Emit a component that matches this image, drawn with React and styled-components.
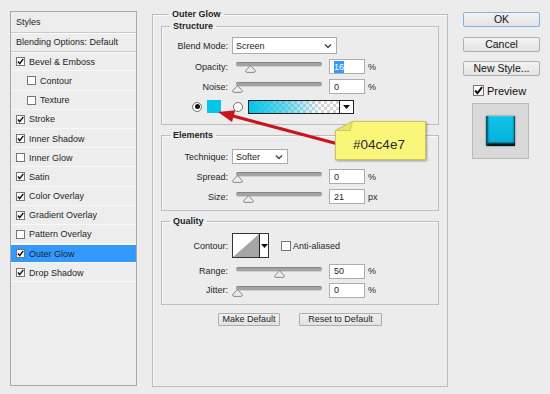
import React from 'react';
import styled, { createGlobalStyle } from 'styled-components';

const Global = createGlobalStyle`
  html, body { margin: 0; padding: 0; background: #ececec; }
  body { font-family: "Liberation Sans", Arial, sans-serif; font-size: 9px; color: #222; }
  #root { width: 550px; height: 394px; overflow: hidden; }
`;

const Dialog = styled.div`
  position: relative;
  width: 550px;
  height: 394px;
  box-sizing: border-box;
  display: flex;
  align-items: flex-start;
  padding: 9px 0 0 10px;
  background: #ececec;
`;

/* ---------- left styles list ---------- */
const StylesPanel = styled.div`
  margin-top: 2px;
  width: 127px;
  height: 375px;
  box-sizing: border-box;
  border: 1px solid #a9a9a9;
  background: #ededed;
  display: flex;
  flex-direction: column;
`;

const PanelHeader = styled.div`
  height: ${p => p.$h}px;
  flex: none;
  box-sizing: border-box;
  display: flex;
  align-items: center;
  padding-left: 5px;
  border-bottom: 1px solid #c9c9c9;
  box-shadow: 0 1px 0 #fbfbfb;
  color: #1e1e1e;
`;

const ListRow = styled.div`
  height: 19.2px;
  flex: none;
  box-sizing: border-box;
  display: flex;
  align-items: center;
  gap: 4px;
  padding-left: ${p => (p.$nested ? 16 : 5)}px;
  border-top: 1px solid ${p => (p.$selected ? '#f8f8f8' : 'transparent')};
  border-bottom: 1px solid #f8f8f8;
  background: ${p => (p.$selected ? '#3399ff' : 'transparent')};
  color: #1e1e1e;
`;

const CheckBox = styled.span`
  display: inline-flex;
  box-sizing: border-box;
  width: ${p => p.$size}px;
  height: ${p => p.$size}px;
  flex: none;
  border: 1px solid #767676;
  background: #fff;
  align-items: center;
  justify-content: center;
`;

const Check = ({ checked, size = 9 }) => (
  <CheckBox $size={size}>
    {checked && (
      <svg width={size - 2} height={size - 2} viewBox="0 0 7 7">
        <path d="M0.9 3.5 L2.7 5.6 L6.3 0.9" fill="none" stroke="#111" strokeWidth="1.5" />
      </svg>
    )}
  </CheckBox>
);

/* ---------- middle: groups ---------- */
const MainGroup = styled.fieldset`
  margin: 0 0 0 15px;
  width: 296px;
  height: 378px;
  box-sizing: border-box;
  min-width: 0;
  border: 1px solid #bdbdbd;
  box-shadow: inset 1px 1px 0 #f9f9f9;
  padding: 1px 8px 0 8px;
  display: flex;
  flex-direction: column;
  gap: 5px;
`;

const Legend = styled.legend`
  margin-left: 8px;
  padding: 0 3px;
  font-weight: bold;
  font-size: 9px;
  line-height: 11px;
  color: #1e1e1e;
`;

const Group = styled.fieldset`
  margin: 0;
  min-width: 0;
  border: 1px solid #bdbdbd;
  box-shadow: inset 1px 1px 0 #f9f9f9;
  padding: ${p => p.$pt}px 0 ${p => p.$pb}px 0;
  display: flex;
  flex-direction: column;
  gap: 5px;
`;

const Row = styled.div`
  display: flex;
  align-items: center;
  height: ${p => p.$h || 15}px;
  margin-bottom: ${p => p.$mb || 0}px;
  padding-left: ${p => p.$pl || 0}px;
`;

const Label = styled.span`
  width: 66px;
  margin-right: 4px;
  text-align: right;
  flex: none;
  color: #262626;
`;

const Select = styled.div`
  width: ${p => p.$w}px;
  height: ${p => p.$h}px;
  box-sizing: border-box;
  border: 1px solid #acacac;
  background: #fff;
  display: flex;
  align-items: center;
  justify-content: space-between;
  padding: 0 4px 0 3px;
  color: #1e1e1e;
  flex: none;
`;

const Chevron = () => (
  <svg width="8" height="6" viewBox="0 0 8 6">
    <path d="M1 1.5 L4 4.5 L7 1.5" fill="none" stroke="#444" strokeWidth="1.4" />
  </svg>
);

const SliderWrap = styled.div`
  position: relative;
  width: 97px;
  height: 15px;
  flex: none;
`;

const Track = styled.div`
  margin: 3px 7px 0 4px;
  height: 3px;
  border-radius: 2px;
  background: #a3a3a3;
  border-top: 1px solid #858585;
  box-shadow: 0 1px 0 #d0d0d0;
`;

const Thumb = styled.svg`
  position: absolute;
  top: 6px;
`;

const Slider = ({ value }) => (
  <SliderWrap>
    <Track />
    <Thumb width="11" height="8" viewBox="0 0 11 8" style={{ left: `${value * 84 - 0.5}px` }}>
      <path d="M5.5 0.6 L10.4 5.8 Q10.4 7.4 8.9 7.4 L2.1 7.4 Q0.6 7.4 0.6 5.8 Z" fill="#ececec" stroke="#7c7c7c" strokeWidth="0.9" />
    </Thumb>
  </SliderWrap>
);

const NumBox = styled.div`
  width: 36px;
  height: 15px;
  box-sizing: border-box;
  border: 1px solid #abadb3;
  background: #fff;
  display: flex;
  align-items: center;
  padding-left: 4px;
  color: #1e1e1e;
  flex: none;
`;

const Sel = styled.span`
  background: #3399ff;
  color: #fff;
  padding: 1px 0;
`;

const Unit = styled.span`
  margin-left: 3px;
  color: #262626;
`;

const Radio = styled.span`
  width: 10px;
  height: 10px;
  box-sizing: border-box;
  border-radius: 50%;
  border: 1px solid #6f6f6f;
  background: #fff;
  display: inline-flex;
  align-items: center;
  justify-content: center;
  flex: none;
  margin-right: ${p => p.$mr}px;
  &::after {
    content: '';
    display: ${p => (p.$on ? 'block' : 'none')};
    width: 5px;
    height: 5px;
    border-radius: 50%;
    background: #111;
  }
`;

const Swatch = styled.span`
  width: 14px;
  height: 13px;
  background: #04c4e7;
  flex: none;
  margin-right: 12px;
`;

const GradientBar = styled.div`
  width: 106px;
  height: 14px;
  box-sizing: border-box;
  border: 1px solid #222;
  display: flex;
  flex: none;
`;

const GradientFill = styled.div`
  flex: 1;
  background-image: linear-gradient(to right, #04c4e7 0%, rgba(4, 196, 231, 0.6) 40%, rgba(4, 196, 231, 0) 80%),
    conic-gradient(#d4d4d4 25%, #ffffff 0 50%, #d4d4d4 0 75%, #ffffff 0);
  background-size: 100% 100%, 6px 6px;
`;

const DropPart = styled.div`
  width: 13px;
  border-left: 1px solid #222;
  background: #fff;
  display: flex;
  align-items: center;
  justify-content: center;
`;

const DownTri = () => (
  <svg width="7" height="4" viewBox="0 0 7 4">
    <path d="M0 0 H7 L3.5 4 Z" fill="#111" />
  </svg>
);

const ContourPicker = styled.div`
  width: 37px;
  height: 25px;
  box-sizing: border-box;
  border: 1px solid #333;
  display: flex;
  flex: none;
  margin-right: 12px;
`;

const ContourPreview = styled.div`
  width: 26px;
  background: #fff;
  display: flex;
`;

const CheckLabel = styled.label`
  display: flex;
  align-items: center;
  gap: ${p => p.$gap || 2}px;
  color: #262626;
`;

const ButtonRow = styled.div`
  display: flex;
  justify-content: center;
  gap: 19px;
  margin-top: 3px;
`;

const SmallButton = styled.button`
  width: ${p => p.$w}px;
  height: 13px;
  box-sizing: border-box;
  padding: 0;
  border: 1px solid #adadad;
  border-radius: 1px;
  background: linear-gradient(#f0f0f0, #e2e2e2);
  font: 9px "Liberation Sans", Arial, sans-serif;
  color: #1e1e1e;
  line-height: 11px;
`;

/* ---------- right column ---------- */
const RightCol = styled.div`
  margin: 3px 0 0 15px;
  width: 77px;
  display: flex;
  flex-direction: column;
`;

const BigButton = styled.button`
  width: 77px;
  height: 15px;
  box-sizing: border-box;
  padding: 0;
  margin-bottom: 9.5px;
  border: 1px solid ${p => (p.$primary ? '#7fb2e6' : '#b0b0b0')};
  border-radius: 2px;
  background: linear-gradient(#f3f3f3, #e3e3e3);
  font: 10.5px "Liberation Sans", Arial, sans-serif;
  line-height: 13px;
  color: #111;
`;

const PreviewLabel = styled.label`
  display: flex;
  align-items: center;
  gap: 3px;
  padding-left: 10px;
  height: 11px;
  font-size: 11px;
  color: #111;
  margin-top: -0.5px;
`;

const PreviewBox = styled.div`
  margin: 7px 0 0 9px;
  width: 57px;
  height: 56px;
  box-sizing: border-box;
  border: 1px solid #b9b9b9;
  background: #d9d9d9;
  display: flex;
  align-items: center;
  justify-content: center;
`;

const PreviewTile = styled.div`
  width: 29px;
  height: 30px;
  background: linear-gradient(#12c3ea, #03b1da);
  box-shadow: inset 3px 0 2px -1px #064e62, inset 0 -4px 2px -1px #011418, inset -2px 0 2px -1px #073644,
    inset 0 1px 0 #40d6f4, 0 0 2px rgba(0, 0, 0, 0.45);
`;

/* ---------- annotation ---------- */
const ArrowLayer = styled.svg`
  position: absolute;
  left: 0;
  top: 0;
  pointer-events: none;
`;

const Note = styled.div`
  position: absolute;
  left: 335px;
  top: 121px;
  width: 92px;
  height: 40px;
  display: flex;
  align-items: center;
  justify-content: center;
  padding: 6px 4px 0 0;
  box-sizing: border-box;
  font-family: "Liberation Sans", Arial, sans-serif;
  font-size: 13.5px;
  color: #2a2a2a;
`;

const NoteShape = styled.svg`
  position: absolute;
  left: 0;
  top: 0;
  filter: drop-shadow(1px 1px 1px rgba(0, 0, 0, 0.35));
`;

const NoteText = styled.span`
  position: relative;
`;

const layers = [
  { label: 'Bevel & Emboss', checked: true },
  { label: 'Contour', nested: true },
  { label: 'Texture', nested: true },
  { label: 'Stroke', checked: true },
  { label: 'Inner Shadow', checked: true },
  { label: 'Inner Glow' },
  { label: 'Satin', checked: true },
  { label: 'Color Overlay', checked: true },
  { label: 'Gradient Overlay', checked: true },
  { label: 'Pattern Overlay' },
  { label: 'Outer Glow', checked: true, selected: true },
  { label: 'Drop Shadow', checked: true },
];

export default function App() {
  return (
    <>
      <Global />
      <Dialog>
        <StylesPanel>
          <PanelHeader $h={21}>Styles</PanelHeader>
          <PanelHeader $h={19.2}>Blending Options: Default</PanelHeader>
          {layers.map(l => (
            <ListRow key={l.label} $nested={l.nested} $selected={l.selected}>
              <Check checked={l.checked} />
              <span>{l.label}</span>
            </ListRow>
          ))}
        </StylesPanel>

        <MainGroup>
          <Legend>Outer Glow</Legend>
          <Group $pt={5} $pb={10}>
            <Legend>Structure</Legend>
            <Row $h={17}>
              <Label>Blend Mode:</Label>
              <Select $w={105} $h={17}>
                <span>Screen</span>
                <Chevron />
              </Select>
            </Row>
            <Row>
              <Label>Opacity:</Label>
              <Slider value={0.16} />
              <NumBox><Sel>16</Sel></NumBox>
              <Unit>%</Unit>
            </Row>
            <Row>
              <Label>Noise:</Label>
              <Slider value={0} />
              <NumBox>0</NumBox>
              <Unit>%</Unit>
            </Row>
            <Row $pl={30}>
              <Radio $on $mr={5} />
              <Swatch />
              <Radio $mr={5} />
              <GradientBar>
                <GradientFill />
                <DropPart><DownTri /></DropPart>
              </GradientBar>
            </Row>
          </Group>

          <Group $pt={8} $pb={6}>
            <Legend>Elements</Legend>
            <Row>
              <Label>Technique:</Label>
              <Select $w={56} $h={15}>
                <span>Softer</span>
                <Chevron />
              </Select>
            </Row>
            <Row>
              <Label>Spread:</Label>
              <Slider value={0} />
              <NumBox>0</NumBox>
              <Unit>%</Unit>
            </Row>
            <Row>
              <Label>Size:</Label>
              <Slider value={0.131} />
              <NumBox>21</NumBox>
              <Unit>px</Unit>
            </Row>
          </Group>

          <Group $pt={6} $pb={7}>
            <Legend>Quality</Legend>
            <Row $h={25} $mb={1}>
              <Label>Contour:</Label>
              <ContourPicker>
                <ContourPreview>
                  <svg width="26" height="23" viewBox="0 0 26 23">
                    <path d="M0 23 L26 0 L26 23 Z" fill="#a6a6a6" />
                  </svg>
                </ContourPreview>
                <DropPart><DownTri /></DropPart>
              </ContourPicker>
              <CheckLabel>
                <Check size={10} />
                <span>Anti-aliased</span>
              </CheckLabel>
            </Row>
            <Row $h={14}>
              <Label>Range:</Label>
              <Slider value={0.5} />
              <NumBox>50</NumBox>
              <Unit>%</Unit>
            </Row>
            <Row $h={14}>
              <Label>Jitter:</Label>
              <Slider value={0} />
              <NumBox>0</NumBox>
              <Unit>%</Unit>
            </Row>
          </Group>

          <ButtonRow>
            <SmallButton $w={62}>Make Default</SmallButton>
            <SmallButton $w={83}>Reset to Default</SmallButton>
          </ButtonRow>
        </MainGroup>

        <RightCol>
          <BigButton $primary>OK</BigButton>
          <BigButton>Cancel</BigButton>
          <BigButton>New Style...</BigButton>
          <PreviewLabel>
            <Check checked size={11} />
            <span>Preview</span>
          </PreviewLabel>
          <PreviewBox>
            <PreviewTile />
          </PreviewBox>
        </RightCol>

        <ArrowLayer width="550" height="394" viewBox="0 0 550 394">
          <line x1="231" y1="115.5" x2="340" y2="144.5" stroke="#c8141c" strokeWidth="3" />
          <path d="M218 112 L235.2 110.2 L232 121.9 Z" fill="#c8141c" />
        </ArrowLayer>

        <Note>
          <NoteShape width="92" height="40" viewBox="0 0 92 40">
            <path d="M0.5 9.5 L17.5 0.5 L90.5 0.5 L90.5 38.5 L0.5 38.5 Z" fill="#faf67a" stroke="#c9c358" strokeWidth="1" />
            <path d="M0.5 9.5 L17.5 0.5 L15 9.5 Z" fill="#e9e46a" stroke="#c9c358" strokeWidth="0.8" />
          </NoteShape>
          <NoteText>#04c4e7</NoteText>
        </Note>
      </Dialog>
    </>
  );
}
